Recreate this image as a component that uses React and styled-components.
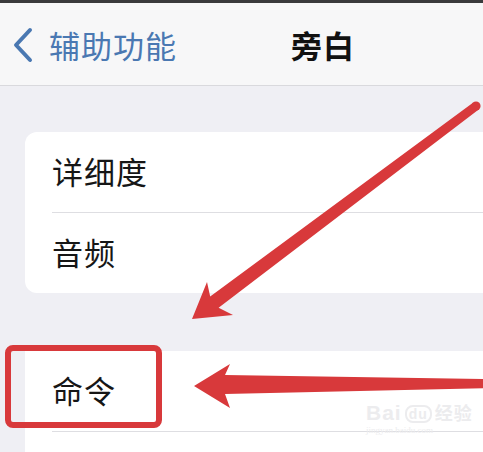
import styled, { createGlobalStyle } from "styled-components";

const Global = createGlobalStyle`
  html, body {
    margin: 0;
    padding: 0;
    background: #efeff4;
  }
  body {
    font-family: "Noto Sans CJK SC", "Noto Sans", sans-serif;
  }
`;

export default function App() {
  return (
    <Page>
      <Global />
      <TopEdge />
      <NavBar>
        <BackButton>
          <svg width="22" height="36" viewBox="0 0 22 36">
            <path
              d="M18 3 L4 18 L18 33"
              fill="none"
              stroke="#4a78b2"
              strokeWidth="4"
              strokeLinecap="round"
              strokeLinejoin="round"
            />
          </svg>
          <span>辅助功能</span>
        </BackButton>
        <Title>旁白</Title>
      </NavBar>

      <Content>
        <Card>
          <Row>
            <span>详细度</span>
          </Row>
          <Row last>
            <span>音频</span>
          </Row>
        </Card>
        <Card flat>
          <Row>
            <span>命令</span>
          </Row>
          <Row last />
        </Card>
      </Content>

      <Highlight />
      <Watermark>
        <span className="logo">
          Bai<span className="du">du</span>
          <span className="jy">经验</span>
        </span>
        <span className="url">jingyan.baidu.com</span>
      </Watermark>
      <Arrows width="483" height="452" viewBox="0 0 483 452">
        <circle cx="476" cy="106" r="4.6" fill="#d8393b" />
        <polygon
          fill="#d8393b"
          points="192,319 233,315 218.6,307.8 478.7,109.6 473.3,102.4 210.2,296.6 207,282"
        />
        <polygon
          fill="#d8393b"
          points="194,386 230,364 225,375 490,379 490,388 225,394 230,408"
        />
      </Arrows>
    </Page>
  );
}

const Page = styled.div`
  position: relative;
  width: 483px;
  height: 452px;
  overflow: hidden;
  background: #efeff4;
  display: flex;
  flex-direction: column;
`;

const TopEdge = styled.div`
  height: 3px;
  background: #3a3a3c;
  flex-shrink: 0;
`;

const NavBar = styled.div`
  height: 83px;
  flex-shrink: 0;
  display: flex;
  align-items: center;
  background: #f7f7f8;
  border-bottom: 1px solid #d9d9dd;
  box-sizing: border-box;
  padding-left: 12px;
`;

const BackButton = styled.div`
  display: flex;
  align-items: center;
  gap: 15px;
  color: #4a78b2;
  font-size: 31px;
  letter-spacing: 1px;

  svg {
    margin-top: 2px;
  }
`;

const Title = styled.div`
  margin-left: 114px;
  font-size: 31px;
  font-weight: 700;
  color: #111;
  letter-spacing: 1px;
`;

const Content = styled.div`
  display: flex;
  flex-direction: column;
  gap: 58px;
  padding: 46px 0 0 25px;
`;

const Card = styled.div`
  background: #fff;
  border-radius: ${(p) => (p.flat ? "0" : "12px 0 0 12px")};
  margin-right: -20px;
`;

const Row = styled.div`
  height: 80px;
  margin-left: 27px;
  display: flex;
  align-items: center;
  font-size: 31px;
  color: #161616;
  letter-spacing: 1px;
  padding-bottom: 0;
  border-bottom: ${(p) => (p.last ? "none" : "1px solid #dedee2")};
  box-sizing: content-box;

  span {
    margin-top: -4px;
  }
`;

const Highlight = styled.div`
  position: absolute;
  left: 5px;
  top: 345px;
  width: 157px;
  height: 83px;
  box-sizing: border-box;
  border: 6px solid #d8393b;
  border-radius: 8px;
`;

const Watermark = styled.div`
  position: absolute;
  left: 366px;
  top: 402px;
  display: flex;
  flex-direction: column;
  align-items: flex-start;
  color: #ececee;
  font-family: "Liberation Sans", sans-serif;

  .logo {
    font-size: 21px;
    font-weight: 700;
    line-height: 20px;
    letter-spacing: 1px;
  }
  .du {
    display: inline-block;
    border: 2px solid #ececee;
    border-radius: 8px;
    font-size: 14px;
    line-height: 14px;
    padding: 0 2px;
    margin: 0 3px;
    vertical-align: middle;
  }
  .jy {
    font-family: "Noto Sans CJK SC", sans-serif;
    font-size: 18px;
  }
  .url {
    font-size: 9px;
    font-family: "Liberation Serif", serif;
    margin-top: 2px;
  }
`;

const Arrows = styled.svg`
  position: absolute;
  left: 0;
  top: 0;
  pointer-events: none;
`;
